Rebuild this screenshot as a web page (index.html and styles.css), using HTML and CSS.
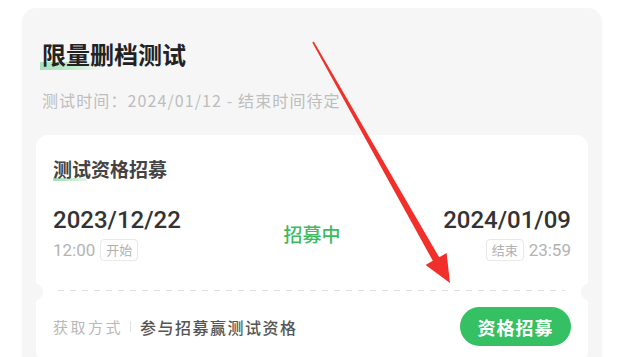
FILE: index.html
```html
<!DOCTYPE html>
<html lang="zh-CN">
<head>
    <meta charset="UTF-8">
    <meta name="viewport" content="width=device-width, initial-scale=1.0">
    <title>限量删档测试</title>
    <link rel="stylesheet" href="styles.css">
</head>
<body>
    <div class="panel">
        <h1 class="title"><span class="mark">限量删档测试</span></h1>
        <div class="subtitle">测试时间：2024/01/12 - 结束时间待定</div>

        <div class="card">
            <div class="card-top">
                <h2 class="card-title"><span class="mark-thin">测试资格招募</span></h2>
                <div class="dates">
                    <div class="date-col">
                        <div class="date">2023/12/22</div>
                        <div class="time-row">
                            <span class="time">12:00</span>
                            <span class="tag">开始</span>
                        </div>
                    </div>
                    <div class="status">招募中</div>
                    <div class="date-col right">
                        <div class="date">2024/01/09</div>
                        <div class="time-row">
                            <span class="tag">结束</span>
                            <span class="time">23:59</span>
                        </div>
                    </div>
                </div>
            </div>
            <div class="divider"></div>
            <div class="card-bottom">
                <div class="way">
                    <span class="way-label">获取方式</span>
                    <span class="sep"></span>
                    <span class="way-text">参与招募赢测试资格</span>
                </div>
                <button class="join">资格招募</button>
            </div>
        </div>
    </div>

    <!-- flecha roja encima de la captura -->
    <svg class="arrow" width="627" height="357" viewBox="0 0 627 357">
        <polygon points="312.3,42.4 313.8,41.6 439.2,257.3 446.6,253 450,283 425.6,265 432.8,260.8" fill="#f2302b"/>
    </svg>
</body>
</html>
```

FILE: styles.css
```css
body {
    margin: 0;
    background: #fff;
    font-family: "Noto Sans CJK SC", "Noto Sans", sans-serif;
    overflow: hidden;
    height: 357px;
    position: relative;
}
.panel {
    margin: 8px 25px 0 22px;
    padding: 31px 14px 20px;
    background: #f6f6f6;
    border-radius: 14px 14px 0 0;
}
.title {
    margin: 0;
    padding-left: 4px;
    font-size: 24px;
    line-height: 30px;
    font-weight: 700;
    color: #222;
}
.mark {
    display: inline-block;
    padding: 0 0 1px 2px;
    background-image: linear-gradient(90deg, #a6e2b8 0%, #bfebcd 50%, rgba(210, 242, 220, 0) 100%);
    background-repeat: no-repeat;
    background-size: 62px 8px;
    background-position: 0 100%;
}
.subtitle {
    margin-top: 20px;
    padding-left: 6px;
    font-size: 16px;
    line-height: 20px;
    letter-spacing: 1.1px;
    color: #bdbdbd;
}
.card {
    margin-top: 25px;
    background: #fff;
    border-radius: 12px;
    position: relative;
}
.card-top {
    padding: 22px 17px 29px;
}
.card-title {
    margin: 0;
    font-size: 19px;
    line-height: 24px;
    font-weight: 700;
    color: #444;
}
.mark-thin {
    display: inline-block;
    background-image: linear-gradient(90deg, #9fdcb2, rgba(169, 227, 187, 0.3));
    background-repeat: no-repeat;
    background-size: 34px 3px;
    background-position: 0 100%;
}
.dates {
    margin-top: 24px;
    display: flex;
    justify-content: space-between;
    align-items: center;
}
.date-col.right {
    text-align: right;
}
.date {
    font-family: Roboto, "Noto Sans", sans-serif;
    font-size: 24px;
    line-height: 30px;
    font-weight: 500;
    color: #333;
}
.time-row {
    margin-top: 4px;
    height: 22px;
    display: flex;
    align-items: center;
    gap: 5px;
}
.right .time-row {
    justify-content: flex-end;
}
.time {
    font-family: Roboto, "Noto Sans", sans-serif;
    font-size: 17px;
    color: #b3b3b3;
}
.tag {
    height: 20px;
    padding: 0 5px;
    border: 1px solid #e8e8e8;
    border-radius: 4px;
    font-size: 13px;
    line-height: 20px;
    color: #b0b0b0;
}
.status {
    font-size: 19px;
    font-weight: 500;
    color: #3dbb5e;
}
.divider {
    height: 1px;
    margin: 0 23px 0 22px;
    background-image: linear-gradient(90deg, #dedede 50%, transparent 50%);
    background-size: 12px 1px;
}
.card::before,
.card::after {
    content: "";
    position: absolute;
    top: 148px;
    width: 18px;
    height: 18px;
    border-radius: 50%;
    background: #f6f6f6;
}
.card::before {
    left: -11px;
}
.card::after {
    right: -11px;
}
.card-bottom {
    padding: 16px 17px 16px;
    display: flex;
    justify-content: space-between;
    align-items: center;
}
.way {
    display: flex;
    align-items: center;
}
.way-label {
    font-size: 15px;
    letter-spacing: 2.5px;
    color: #b8b8b8;
}
.sep {
    width: 1px;
    height: 11px;
    margin: 0 9px 0 7px;
    background: #e2e2e2;
}
.way-text {
    font-size: 16px;
    letter-spacing: 1.5px;
    font-weight: 500;
    color: #555;
}
.join {
    width: 111px;
    height: 39px;
    border: none;
    border-radius: 20px;
    background: #35c063;
    color: #fff;
    font-family: "Noto Sans CJK SC", sans-serif;
    font-size: 18px;
    font-weight: 700;
    letter-spacing: 1px;
    padding: 0;
}
.arrow {
    position: absolute;
    top: 0;
    left: 0;
    pointer-events: none;
}
```
